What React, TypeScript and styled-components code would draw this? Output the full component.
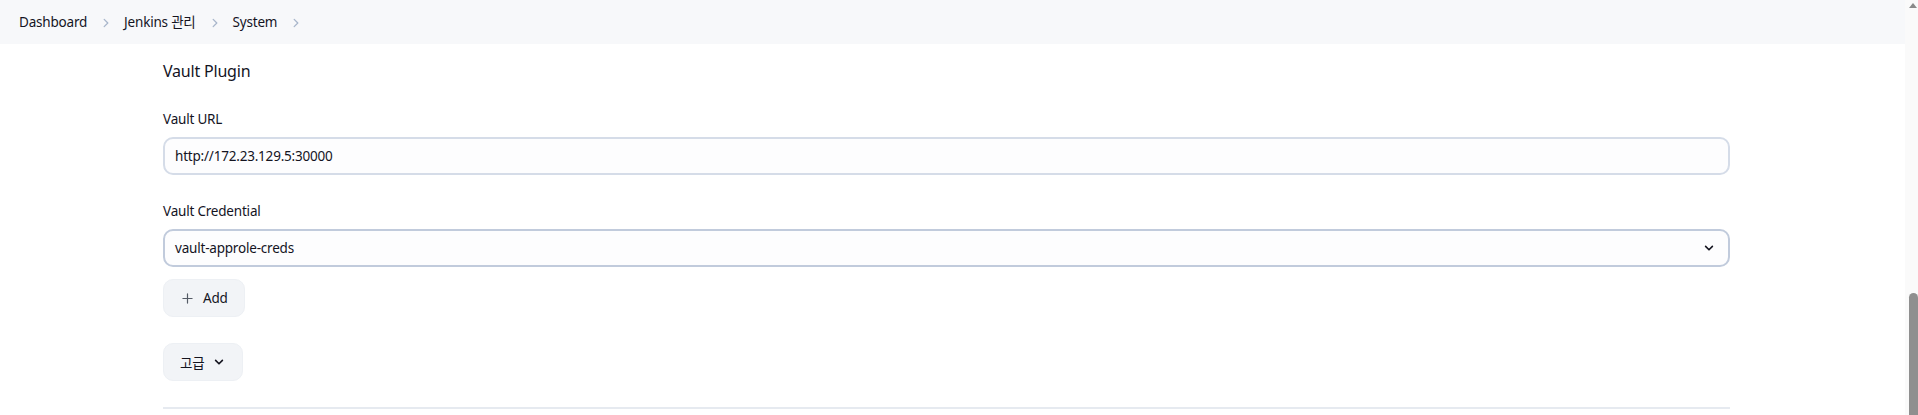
import React from 'react';
import styled, { createGlobalStyle } from 'styled-components';

const font = `"Segoe UI", "Noto Sans", "Noto Sans CJK KR", sans-serif`;

const GlobalStyle = createGlobalStyle`
  html, body {
    margin: 0;
    padding: 0;
    background: #ffffff;
    overflow: hidden;
  }
  body {
    font-family: ${font};
    color: #14141f;
    letter-spacing: -0.2px;
  }
`;

const crumbs = ['Dashboard', 'Jenkins 관리', 'System'];

const Chevron: React.FC<{ size?: number; color?: string }> = ({ size = 12, color = '#a8b6cb' }) => (
  <svg width={size} height={size} viewBox="0 0 12 12" fill="none">
    <path d="M4.2 2.4 L7.8 6 L4.2 9.6" stroke={color} strokeWidth={1.3} strokeLinecap="round" strokeLinejoin="round" />
  </svg>
);

const ChevronDown: React.FC<{ size?: number }> = ({ size = 12 }) => (
  <svg width={size} height={size} viewBox="0 0 12 12" fill="none">
    <path d="M2.6 4.4 L6 7.8 L9.4 4.4" stroke="#14141f" strokeWidth={1.6} strokeLinecap="round" strokeLinejoin="round" />
  </svg>
);

export default function App() {
  return (
    <>
      <GlobalStyle />
      <Root>
        <Main>
          <Breadcrumbs>
            {crumbs.map(c => (
              <Crumb key={c}>
                <CrumbText>{c}</CrumbText>
                <Chevron />
              </Crumb>
            ))}
          </Breadcrumbs>
          <Content>
            <SectionTitle>Vault Plugin</SectionTitle>
            <Field>
              <Label>Vault URL</Label>
              <TextInput readOnly value="http://172.23.129.5:30000" />
            </Field>
            <Field>
              <Label>Vault Credential</Label>
              <SelectBox>
                <span>vault-approle-creds</span>
                <ChevronDown />
              </SelectBox>
            </Field>
            <GhostButton $top={12} $padding="0 16px 0 18px" $gap={10}>
              <PlusIcon viewBox="0 0 12 12">
                <path d="M6 1 V11 M1 6 H11" stroke="#555b66" strokeWidth={1.3} strokeLinecap="round" />
              </PlusIcon>
              Add
            </GhostButton>
            <GhostButton $top={26} $padding="0 17px 0 16px" $gap={9}>
              고급
              <ChevronDown />
            </GhostButton>
            <Divider />
          </Content>
        </Main>
        <Scrollbar>
          <ArrowUp />
          <Thumb />
        </Scrollbar>
      </Root>
    </>
  );
}

const Root = styled.div`
  display: flex;
  width: 1918px;
  height: 415px;
  overflow: hidden;
`;

const Main = styled.div`
  flex: 1;
  display: flex;
  flex-direction: column;
`;

const Breadcrumbs = styled.nav`
  height: 44px;
  flex-shrink: 0;
  background: #f7f8fa;
  display: flex;
  align-items: center;
  padding-left: 19px;
  gap: 12px;
  font-size: 13.5px;
`;

const Crumb = styled.div`
  display: flex;
  align-items: center;
  gap: 13px;
  svg {
    margin-top: 1px;
  }
`;

const CrumbText = styled.span`
  color: #14141f;
  line-height: 20px;
  white-space: nowrap;
`;

const Content = styled.div`
  padding: 15px 175px 0 163px;
  display: flex;
  flex-direction: column;
  align-items: flex-start;
`;

const SectionTitle = styled.h2`
  margin: 0;
  font-size: 16px;
  font-weight: 400;
  line-height: 24px;
`;

const Field = styled.div`
  width: 100%;
  display: flex;
  flex-direction: column;
  margin-top: 26px;
`;

const Label = styled.label`
  font-size: 13.5px;
  line-height: 20px;
  margin-bottom: 8px;
`;

const TextInput = styled.input`
  box-sizing: border-box;
  height: 38px;
  width: 100%;
  border: 2px solid #d5dce8;
  border-radius: 10px;
  background: #fdfdfe;
  padding: 0 10px;
  font-family: ${font};
  font-size: 13.5px;
  letter-spacing: -0.2px;
  color: #14141f;
  outline: none;
`;

const SelectBox = styled.div`
  box-sizing: border-box;
  height: 38px;
  width: 100%;
  border: 2px solid #c1cbdc;
  border-radius: 10px;
  background: #fdfdfe;
  padding: 0 10px;
  display: flex;
  align-items: center;
  justify-content: space-between;
  font-size: 13.5px;
  svg {
    margin-right: 3px;
  }
`;

const GhostButton = styled.button<{ $top: number; $padding: string; $gap: number }>`
  box-sizing: border-box;
  margin-top: ${p => p.$top}px;
  height: 38px;
  padding: ${p => p.$padding};
  border: 1px solid #edf0f4;
  border-radius: 10px;
  background: #f2f4f7;
  display: flex;
  align-items: center;
  gap: ${p => p.$gap}px;
  white-space: nowrap;
  font-family: ${font};
  font-size: 13.5px;
  letter-spacing: -0.2px;
  color: #14141f;
`;

const PlusIcon = styled.svg`
  width: 11px;
  height: 11px;
`;

const Divider = styled.hr`
  width: 100%;
  margin: 26px 0 0;
  border: none;
  height: 2px;
  background: #e6eaf0;
`;

const Scrollbar = styled.div`
  width: 13px;
  flex-shrink: 0;
  background: #fafafa;
  display: flex;
  flex-direction: column;
  align-items: center;
  justify-content: space-between;
  padding-top: 3px;
`;

const ArrowUp = styled.div`
  width: 0;
  height: 0;
  margin-left: 3px;
  border-left: 4px solid transparent;
  border-right: 4px solid transparent;
  border-bottom: 5px solid #8a8a8a;
`;

const Thumb = styled.div`
  width: 9px;
  margin-left: 3px;
  height: 122px;
  background: #8f8f8f;
  border-radius: 5px 5px 0 0;
`;
